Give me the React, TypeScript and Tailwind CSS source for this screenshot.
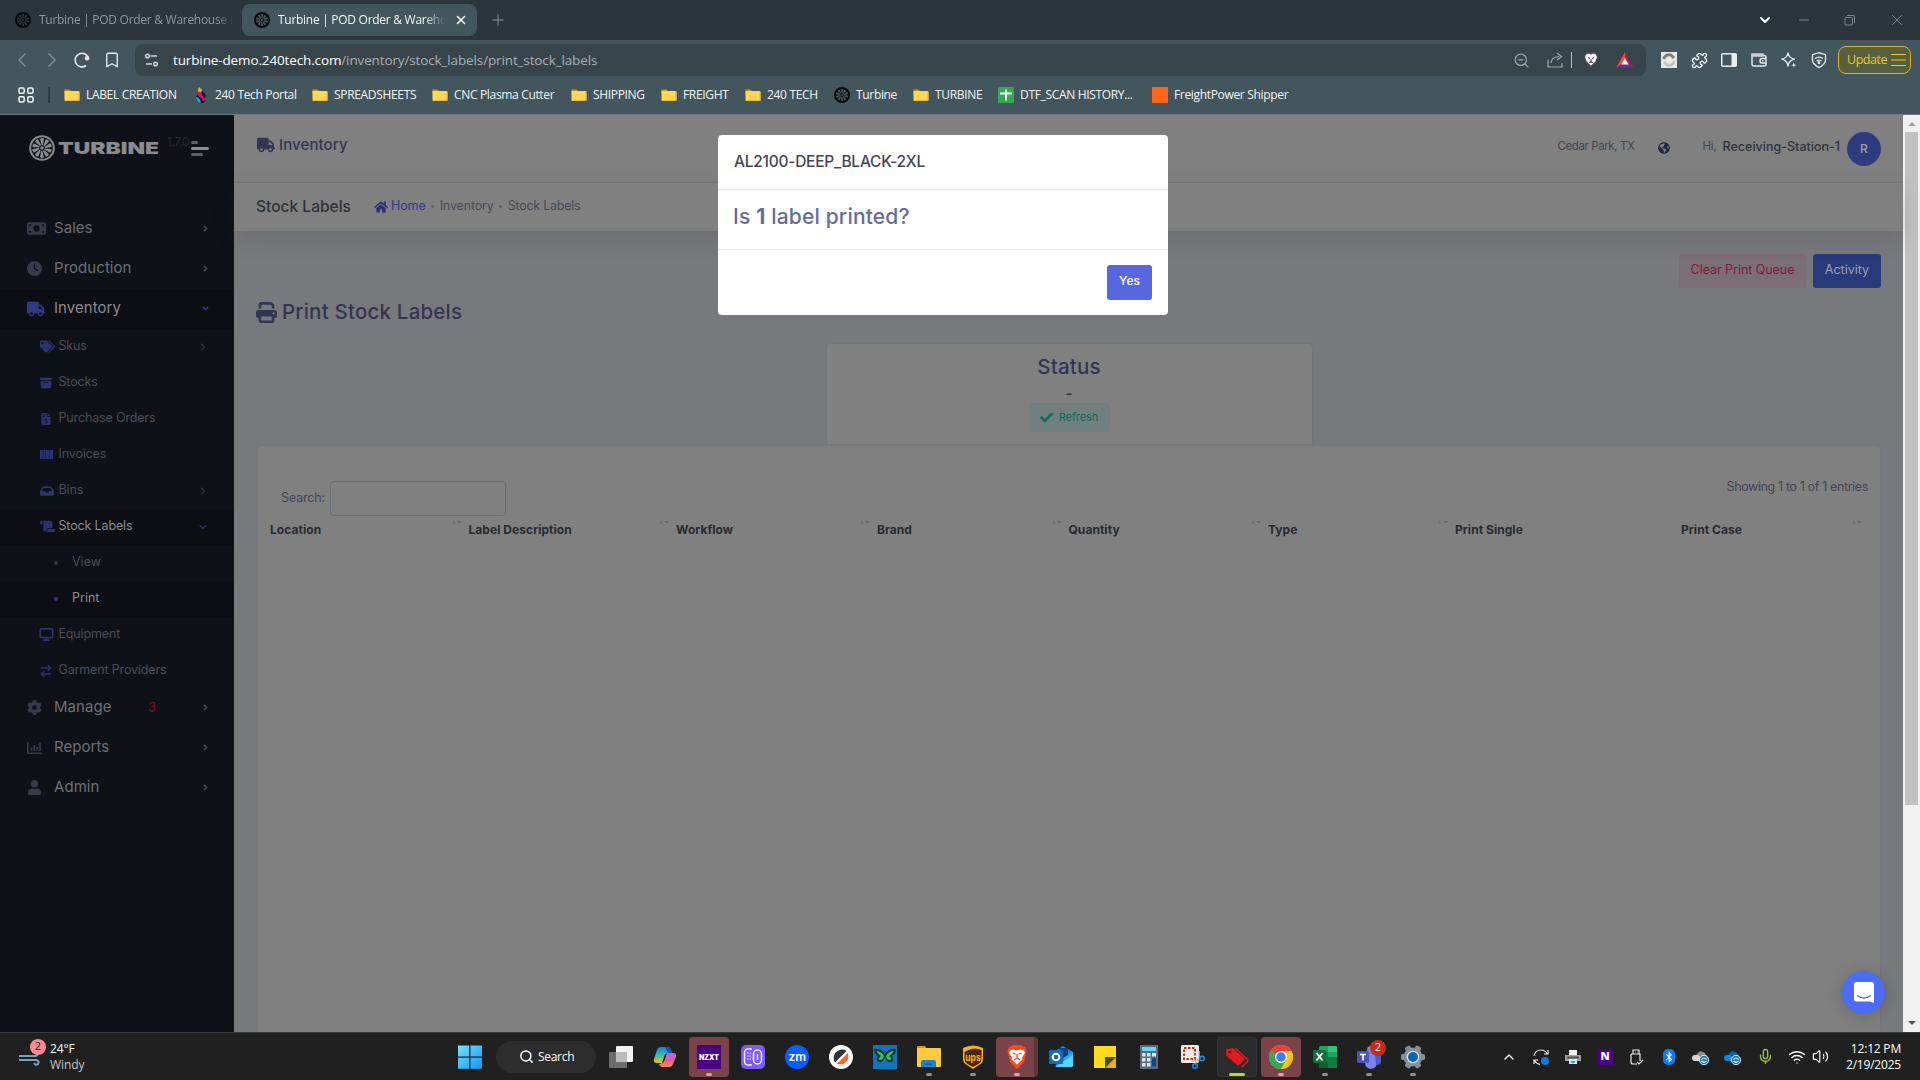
import type { ReactNode } from "react";
import { FaHome, FaGlobeAmericas, FaTags, FaInbox, FaUser, FaCheck } from "react-icons/fa";
import {
  FaTruck, FaMoneyBill, FaClock, FaBoxArchive, FaFileInvoiceDollar, FaScroll,
  FaArrowRightArrowLeft, FaGear, FaPrint, FaBluetoothB,
} from "react-icons/fa6";
import {
  Search, ChevronDown, ChevronRight, ChevronUp, ChevronLeft, X, Plus, Minus, Puzzle, Bookmark,
  ZoomOut, Mic, Wifi, Volume2, Monitor,
} from "lucide-react";

/* ---------- browser chrome ---------- */

function TurbineMark({ className, fg = "#4b5a60", bg = "#05080a" }: { className: string; fg?: string; bg?: string }) {
  const blades = [0, 36, 72, 108, 144, 180, 216, 252, 288, 324];
  return (
    <svg viewBox="0 0 32 32" className={className}>
      <circle cx="16" cy="16" r="16" fill={bg} />
      {blades.map((a) => (
        <path key={a} d="M15.5 12.5 L13.6 4.6 Q16 3.2 18.4 4.2 L17.2 12.5Z" fill={fg} transform={`rotate(${a} 16 16)`} />
      ))}
      <circle cx="16" cy="16" r="2.2" fill={fg} />
    </svg>
  );
}

function Folder() {
  return (
    <svg viewBox="0 0 16 16" className="size-4 shrink-0">
      <path d="M0.5 2.5h5l1.5 1.5h8v3H0.5z" fill="#c99512" />
      <path d="M1 4h13.5q1 0 1 1v8q0 1-1 1H1.5q-1 0-1-1V4.5z" fill="#ffd758" />
      <path d="M15 5v8.5H2" fill="none" stroke="#efb62e" />
    </svg>
  );
}

function PortalIcon() {
  return (
    <svg viewBox="0 0 16 16" className="size-4 shrink-0">
      <path d="M8 3q5 3 5 8t-5 5-5-4 5-9z" fill="#1b1620" />
      <path d="M6 0l3 3-1 3-3-2z" fill="#f4b81c" />
      <path d="M4 6q4-3 5 1t3 4l1-3q1 6-3 6-1-3-3-4T4 6z" fill="#d3127a" />
      <path d="M3 10q3 0 5 5l-1 1q-4-1-4-6z" fill="#18a8e0" />
    </svg>
  );
}

function SheetIcon() {
  return (
    <svg viewBox="0 0 16 16" className="size-4 shrink-0">
      <rect width="16" height="16" rx="1.5" fill="#34a853" />
      <path d="M8 2.5v11M2 6.5h12" stroke="#fff" strokeWidth="1.8" />
    </svg>
  );
}

const bookmarks: { label: string; icon: ReactNode; width: string }[] = [
  { label: "LABEL CREATION", icon: <Folder />, width: "w-[129px]" },
  { label: "240 Tech Portal", icon: <PortalIcon />, width: "w-[119px]" },
  { label: "SPREADSHEETS", icon: <Folder />, width: "w-[120px]" },
  { label: "CNC Plasma Cutter", icon: <Folder />, width: "w-[139px]" },
  { label: "SHIPPING", icon: <Folder />, width: "w-[90px]" },
  { label: "FREIGHT", icon: <Folder />, width: "w-[84px]" },
  { label: "240 TECH", icon: <Folder />, width: "w-[89px]" },
  { label: "Turbine", icon: <TurbineMark className="size-4 shrink-0" />, width: "w-[79px]" },
  { label: "TURBINE", icon: <Folder />, width: "w-[85px]" },
  { label: "DTF_SCAN HISTORY...", icon: <SheetIcon />, width: "w-[154px]" },
  { label: "FreightPower Shipper", icon: <span className="size-4 shrink-0 bg-[#ff6418]" />, width: "w-[150px]" },
];

function TabStrip() {
  return (
    <div className="flex h-10 shrink-0 items-center bg-[#2b353b] text-[12px] tracking-[-0.28px]">
      <div className="flex h-8 w-[242px] items-center pl-[15px] text-[#8f999d]">
        <TurbineMark className="size-4 shrink-0" fg="#2b353b" />
        <span className="ml-2 whitespace-nowrap [mask-image:linear-gradient(90deg,#000_92%,transparent)]">
          Turbine | POD Order &amp; Warehouse I
        </span>
      </div>
      <div className="flex h-8 w-[235px] items-center rounded-lg bg-[#44565d] pl-3 text-[#f4f6f7]">
        <TurbineMark className="size-4 shrink-0" />
        <span className="ml-2 w-[167px] whitespace-nowrap [mask-image:linear-gradient(90deg,#000_88%,transparent)]">
          Turbine | POD Order &amp; Wareho
        </span>
        <X className="ml-[9px] size-3.5" strokeWidth={2.6} />
      </div>
      <Plus className="ml-3 size-[18px] text-[#8b969a]" strokeWidth={1.3} />
      <div className="ml-auto flex items-center text-[#7e888c]">
        <ChevronDown className="size-4 text-white" strokeWidth={3} />
        <Minus className="ml-[23px] size-4" strokeWidth={1.5} />
        <svg viewBox="0 0 12 12" className="ml-8 size-3 fill-none stroke-current">
          <rect x="1" y="3.5" width="7.5" height="7.5" rx="1" />
          <path d="M3 1.5h6q1.5 0 1.5 1.5v6" />
        </svg>
        <X className="mr-3.5 ml-8 size-[18px]" strokeWidth={1.3} />
      </div>
    </div>
  );
}

function Toolbar() {
  return (
    <div className="flex h-10 shrink-0 items-center text-[#e9edef]">
      <ChevronLeft className="ml-2.5 size-6 text-[#87949a]" strokeWidth={1.2} />
      <ChevronRight className="ml-1.5 size-6 text-[#87949a]" strokeWidth={1.2} />
      <svg viewBox="0 0 18 18" className="ml-[9px] size-[18px]">
        <path d="M13 14.5A6.8 6.8 0 1 1 15.6 8" fill="none" stroke="currentColor" strokeWidth="1.6" />
        <circle cx="14" cy="7.2" r="2.3" fill="currentColor" />
      </svg>
      <Bookmark className="ml-3 size-[18px]" strokeWidth={1.8} />
      <div className="ml-3.5 flex h-8 w-[1511px] items-center rounded-lg bg-[#37444a] pl-[9px]">
        <svg viewBox="0 0 16 16" className="size-4 fill-none stroke-[#cfd5d8] stroke-[1.5]">
          <circle cx="3.5" cy="4" r="1.8" />
          <path d="M6.5 4H13M2 12h6" />
          <circle cx="11.5" cy="12" r="1.8" />
        </svg>
        <span className="ml-[13px] text-[13.5px] tracking-[-0.13px] text-[#a7b0b4]">
          <span className="text-white">turbine-demo.240tech.com</span>/inventory/stock_labels/print_stock_labels
        </span>
        <div className="ml-auto flex items-center pr-3">
          <ZoomOut className="size-[17px] text-[#9fa9ad]" strokeWidth={1.7} />
          <svg viewBox="0 0 16 16" className="ml-[17px] size-4 fill-none stroke-[#9fa9ad] stroke-[1.2]">
            <path d="M1 7.5V15h14v-4M4 11q.5-6 8-6.5M10 1l4.5 3.5L10 8" />
          </svg>
          <span className="ml-2 h-4 w-px bg-[#b7bfc2]" />
          <svg viewBox="0 0 16 16" className="ml-[11px] size-4">
            <path d="M2 2l2-2h8l2 2 1 3-2 7-5 4-5-4-2-7z" fill="#4b4654" />
            <path d="M3 2.5l3-1 2 1 2-1 3 1 1 3-2 4.5-4 3.5-4-3.5-2-4.500z" fill="#f5f5f7" />
            <path d="M5 5.5l2 1M11 5.5l-2 1M8 7v3M6 10.5l2-1 2 1" stroke="#4b4654" />
          </svg>
          <svg viewBox="0 0 18 16" className="ml-[17px] h-4 w-[18px]">
            <path d="M9 0L9 7 5.5 12 0 16z" fill="#ff4b20" />
            <path d="M9 0l9 16-5.500-4L9 7z" fill="#9e1f63" />
            <path d="M0 16l5.500-4h7L18 16z" fill="#662d91" />
            <path d="M9 6l3.700 6.500H5.300z" fill="#fff" />
          </svg>
        </div>
      </div>
      <div className="ml-[15px] flex items-center gap-3.5">
        <span className="flex size-4 items-center justify-center bg-[#e9e9e9]">
          <svg viewBox="0 0 16 16" className="size-4 fill-none stroke-[3]">
            <path d="M2.5 7Q5 1.5 10 3l3 3" stroke="#7d7d7d" />
            <path d="M13.5 9Q11 14.5 6 13l-3-3" stroke="#c4c4c4" />
          </svg>
        </span>
        <Puzzle className="-mr-px size-[17px]" strokeWidth={2} />
        <svg viewBox="0 0 16 14" className="h-3.5 w-4">
          <rect x=".75" y=".75" width="14.5" height="12.5" rx="1" fill="none" stroke="currentColor" strokeWidth="1.5" />
          <path d="M10.5 1H15v12h-4.500z" fill="currentColor" />
        </svg>
        <svg viewBox="0 0 16 14" className="h-3.5 w-4 fill-none stroke-[#e2e7e9] stroke-[1.5]">
          <path d="M1 2.5h12q2 0 2 2v7q0 1.500-2 1.500H3q-2 0-2-2z" />
          <path d="M1 1h11v2H1z" fill="#c9cfd2" stroke="#c9cfd2" />
          <path d="M15 5.500h-4q-2 0-2 2.200t2 2.300h4M11 7.700h1.500" />
        </svg>
        <svg viewBox="0 0 16 16" className="size-4 fill-none stroke-current stroke-[1.3]">
          <path d="M7 1q.8 5 6.500 6.200Q7.800 8.500 7 14 6.200 8.500.8 7.200 6.200 6 7 1z" strokeLinejoin="round" />
          <path d="M12.800 10.500l.7 2 2 .7-2 .6-.7 1.700-.7-1.700-2-.6 2-.7z" fill="currentColor" stroke="none" />
        </svg>
        <svg viewBox="0 0 16 16" className="size-4 fill-none stroke-current stroke-[1.3]">
          <path d="M8 .7l6.500 2v6Q13.500 13 8 15.500 2.500 13 1.500 8.700v-6z" />
          <path d="M4 6.500q4-2.800 8 0M5.500 9q2.500-1.700 5 0" />
          <circle cx="8" cy="10.700" r=".7" />
        </svg>
      </div>
      <div className="ml-[11px] flex h-7 w-[73px] items-center rounded-lg border-[1.5px] border-[#dcb32c] bg-[#56603f] pl-2 text-[12.5px] tracking-[-0.45px] text-[#f0c52f]">
        Update
        <svg viewBox="0 0 15 12" className="ml-1 h-3 w-[15px] shrink-0 stroke-[#f0c52f]">
          <path d="M0 .5h15M0 6h15M0 11.500h15" />
        </svg>
      </div>
    </div>
  );
}

function BookmarksBar() {
  return (
    <div className="flex h-[35px] shrink-0 items-center border-b border-[#6b797e] pb-1 text-[12px] tracking-[-0.33px] text-[#f2f5f6]">
      <svg viewBox="0 0 16 16" className="ml-[18px] size-4 fill-none stroke-current stroke-[1.5]">
        <rect x="1" y="1" width="5.200" height="5.200" rx="1.200" />
        <rect x="9.800" y="1" width="5.200" height="5.200" rx="1.200" />
        <rect x="1" y="9.800" width="5.200" height="5.200" rx="1.200" />
        <rect x="9.800" y="9.800" width="5.200" height="5.200" rx="1.200" />
      </svg>
      <span className="mr-3.5 ml-3.5 h-4 w-0.5 bg-[#2f3c42]" />
      {bookmarks.map((b) => (
        <div key={b.label} className={`flex items-center gap-1.5 whitespace-nowrap ${b.width}`}>
          {b.icon}
          <span>{b.label}</span>
        </div>
      ))}
    </div>
  );
}

/* ---------- application ---------- */

const InvoiceStrip = () => (
  <svg viewBox="0 0 13 9" className="h-[9px] w-[13px]">
    <rect width="13" height="9" fill="currentColor" />
    <path d="M3 0v9M5.500 0v9M9.500 0v9" stroke="#151a45" strokeWidth=".6" />
  </svg>
);

const BarChart = () => (
  <svg viewBox="0 0 15 12" className="h-3 w-[15px]">
    <path d="M.8 0v11.200H15" fill="none" stroke="currentColor" strokeWidth="1.600" />
    <path d="M4.500 9V5.500M7.200 9V3M10 9V4.500M13 9V.8" stroke="currentColor" strokeWidth="1.700" />
  </svg>
);

function TopItem({ icon, label, active, badge }: { icon: ReactNode; label: string; active?: boolean; badge?: string }) {
  return (
    <div className={`flex h-10 items-center pl-[27px] text-[15px] ${active ? "bg-[#0c0e14] text-[#8a8b8e]" : "text-[#6d6f76]"}`}>
      <span className={`w-[27px] ${active ? "text-[#2f3a82]" : "text-[#363a49]"}`}>{icon}</span>
      <span className="w-[94px] tracking-[0.05px]">{label}</span>
      <span className="text-[13px] text-[#8c0b16]">{badge}</span>
      {active ? (
        <ChevronDown className="mr-6 ml-auto size-[9px] text-[#2f3a82]" strokeWidth={4} />
      ) : (
        <ChevronRight className="mr-6 ml-auto size-[9px] text-[#4a4c57]" strokeWidth={4} />
      )}
    </div>
  );
}

function SubItem({ icon, label, active, arrow }: { icon: ReactNode; label: string; active?: boolean; arrow?: boolean }) {
  return (
    <div className={`flex h-9 items-center pl-10 text-[12.5px] ${active ? "bg-[#0c0e14] text-[#8a8b8e]" : "text-[#4a4d57]"}`}>
      <span className="w-[18.5px] text-[#2b3372]">{icon}</span>
      <span className="tracking-[-0.15px] whitespace-nowrap">{label}</span>
      {arrow && !active && <ChevronRight className="mr-[25px] ml-auto size-3 text-[#32343f]" strokeWidth={2.2} />}
      {arrow && active && <ChevronDown className="mr-[25px] ml-auto size-3 text-[#2b3372]" strokeWidth={2.2} />}
    </div>
  );
}

function LeafItem({ label, active }: { label: string; active?: boolean }) {
  return (
    <div className={`flex h-9 items-center pl-[54px] text-[12.5px] ${active ? "bg-[#0c0e14] text-[#8a8b8e]" : "text-[#4a4d57]"}`}>
      <span className={`mr-3.5 size-1 rounded-full ${active ? "bg-[#2f3a82]" : "bg-[#363a49]"}`} />
      <span>{label}</span>
    </div>
  );
}

function Sidebar() {
  return (
    <aside className="w-[234px] shrink-0 bg-[#0f1118]">
      <div className="flex h-[93.5px] pl-[29px]">
        <TurbineMark className="mt-5 size-[26px]" fg="#8a8b8d" bg="#0f1118" />
        <svg viewBox="0 0 131 26" className="-ml-[26px] mt-5 h-[26px] w-[131px] shrink-0">
          <circle cx="13" cy="13" r="11.800" fill="none" stroke="#8a8b8d" strokeWidth="2" />
          <text x="29" y="19" fontFamily="Inter" fontWeight="900" fontSize="16.500" textLength="101" lengthAdjust="spacingAndGlyphs" fill="#8a8b8d">
            TURBINE
          </text>
        </svg>
        <span className="mt-[18px] ml-[7px] w-6 text-[12px] leading-[18px] font-light tracking-[-0.3px] text-[#2c2f3c]">1.7.0</span>
        <div className="mt-[26px] flex flex-col gap-[3.5px]">
          <span className="h-[2.5px] w-[7px] rounded bg-[#5f6065]" />
          <span className="h-[2.5px] w-[18px] rounded bg-[#8a8b8d]" />
          <span className="h-[2.5px] w-3 rounded bg-[#5f6065]" />
        </div>
      </div>
      <TopItem icon={<FaMoneyBill className="size-[19px]" />} label="Sales" />
      <TopItem icon={<FaClock className="size-[15px]" />} label="Production" />
      <TopItem icon={<FaTruck className="size-[18px]" />} label="Inventory" active />
      <SubItem icon={<FaTags className="size-[15px]" />} label="Skus" arrow />
      <SubItem icon={<FaBoxArchive className="size-3" />} label="Stocks" />
      <SubItem icon={<FaFileInvoiceDollar className="size-3" />} label="Purchase Orders" />
      <SubItem icon={<InvoiceStrip />} label="Invoices" />
      <SubItem icon={<FaInbox className="size-3.5" />} label="Bins" arrow />
      <SubItem icon={<FaScroll className="size-[15px]" />} label="Stock Labels" arrow active />
      <LeafItem label="View" />
      <LeafItem label="Print" active />
      <SubItem icon={<Monitor className="-ml-px size-[15px]" strokeWidth={2.6} />} label="Equipment" />
      <SubItem icon={<FaArrowRightArrowLeft className="size-3" />} label="Garment Providers" />
      <div className="-mt-px">
        <TopItem icon={<FaGear className="size-[15px]" />} label="Manage" badge="3" />
        <TopItem icon={<BarChart />} label="Reports" />
        <TopItem icon={<FaUser className="size-[15px]" />} label="Admin" />
      </div>
    </aside>
  );
}

function Header() {
  return (
    <>
      <header className="flex h-[68px] shrink-0 items-center border-b border-[#777778] bg-[#808080] pr-[22px] pl-[23px]">
        <FaTruck className="mb-2 size-[18px] text-[#323650]" />
        <span className="mb-1.5 ml-1 text-[15px] font-medium tracking-[0.1px] text-[#323650]">Inventory</span>
        <div className="ml-auto flex items-center text-[#444551]">
          <span className="mb-[3px] text-[11.5px] tracking-[-0.4px]">Cedar Park, TX</span>
          <FaGlobeAmericas className="mb-px ml-6 size-3 text-[#25283c]" />
          <span className="mb-[3px] ml-8 text-[11.5px] tracking-[-0.2px]">Hi,</span>
          <span className="mb-[3px] ml-1.5 text-[12.5px] font-medium tracking-[0.01px] text-[#303340]">Receiving-Station-1</span>
          <span className="ml-[7px] flex size-[34px] items-center justify-center rounded-full bg-[#2e3b7f] text-[12px] font-semibold text-[#9498ae]">R</span>
        </div>
      </header>
      <div className="relative flex h-12 shrink-0 items-center bg-[#808080] pb-px pl-[22px] shadow-[0_8px_22px_rgba(40,40,50,0.14)]">
        <h3 className="text-[15.5px] font-medium tracking-[0.02px] text-[#303238]">Stock Labels</h3>
        <div className="ml-[23px] flex items-center text-[12.5px] text-[#4a4b57]">
          <FaHome className="size-3.5 text-[#2b3078]" />
          <span className="ml-[3px] tracking-[-0.1px] text-[#34388a]">Home</span>
          <i className="mx-[5.5px] size-[3px] rounded-full bg-[#606170]" />
          <span className="tracking-[-0.15px]">Inventory</span>
          <i className="mx-[5.5px] size-[3px] rounded-full bg-[#606170]" />
          <span className="tracking-[-0.25px]">Stock Labels</span>
        </div>
      </div>
    </>
  );
}

const columns = [
  { label: "Location", width: "w-[198.5px]" },
  { label: "Label Description", width: "w-[207.5px]" },
  { label: "Workflow", width: "w-[201px]" },
  { label: "Brand", width: "w-[191.500px]" },
  { label: "Quantity", width: "w-[199.500px]" },
  { label: "Type", width: "w-[187px]" },
  { label: "Print Single", width: "w-[226px]", unsorted: true },
  { label: "Print Case", width: "w-[188px]" },
];

function SortMark() {
  return (
    <svg viewBox="0 0 9 3" className="mr-[7px] h-[3px] w-[9px]">
      <path d="M.5 0h1v3h-1zM4 0h5L6.500 2.500z" fill="#666771" />
    </svg>
  );
}

function Content() {
  return (
    <main className="flex min-h-0 flex-1 flex-col pr-[22px] pl-[23px]">
      <div className="flex justify-end gap-[7px] pt-[23px] text-[12.5px]">
        <button className="flex h-[34px] w-[127px] justify-center rounded-[3px] bg-[#7c6e75] pt-[7px] tracking-[-0.05px] text-[#7d1c3c]">Clear Print Queue</button>
        <button className="flex h-[34px] w-[68px] justify-center rounded-[3px] bg-[#283a79] pt-[7px] text-[#9a9fb5]">Activity</button>
      </div>
      <div className="mt-[9px] flex h-[30px] items-center text-[#323650]">
        <FaPrint className="-ml-px size-[21px]" />
        <h2 className="ml-[5px] text-[20.5px] font-medium tracking-[0.2px]">Print Stock Labels</h2>
      </div>
      <div className="mt-4 flex h-[102px] w-[487px] flex-col items-center self-center rounded-t-[4px] border border-[#74757a] bg-[#808080]">
        <h2 className="mt-2 text-[20.5px] leading-[30px] font-medium tracking-[0.2px] text-[#323650]">Status</h2>
        <span className="mt-0.5 h-[19px] text-[15px] leading-5 font-semibold text-[#33363f]">-</span>
        <button className="flex h-[29px] w-[81px] items-center justify-center gap-1.5 rounded-[3px] bg-[#71807f] text-[11px] tracking-[-0.1px] text-[#0e6e5a]">
          <FaCheck className="size-[13px]" />
          Refresh
        </button>
      </div>
      <section className="flex-1 rounded-t-[4px] border border-b-0 border-[#74757d] bg-[#808080]">
        <div className="flex justify-between pr-3 pl-[23px] text-[12.5px] text-[#444653]">
          <label className="mt-[35px] flex items-center gap-1.5">
            <span className="w-[43px] tracking-[-0.15px] whitespace-nowrap">Search:</span>
            <input className="h-[35px] w-[176px] rounded-[4px] border border-[#6b6c76] bg-transparent" />
          </label>
          <span className="mt-8 tracking-[-0.37px]">Showing 1 to 1 of 1 entries</span>
        </div>
        <div className="mt-[5px] flex pl-3">
          {columns.map((c) => (
            <div key={c.label} className={`flex items-start justify-between ${c.width}`}>
              <span className="text-[12px] leading-[18px] font-bold tracking-[0.05px] whitespace-nowrap text-[#282a31]">{c.label}</span>
              {!c.unsorted && <SortMark />}
            </div>
          ))}
        </div>
      </section>
    </main>
  );
}

function Modal() {
  return (
    <div className="absolute top-5 left-[718px] h-[180px] w-[450px] rounded-[4px] bg-white">
      <h5 className="h-[55px] border-b border-[#ebedf2] pt-[15px] pl-4 text-[15.5px] leading-6 font-medium tracking-[-0.25px] text-[#464457]">AL2100-DEEP_BLACK-2XL</h5>
      <div className="h-[60px] border-b border-[#ebedf2] pt-[11px] pl-[15px] text-[21px] leading-[31px] font-medium tracking-[0.18px] text-[#646c9a]">
        Is <b>1</b> label printed?
      </div>
      <div className="flex justify-end pt-[15px] pr-4">
        <button className="flex h-[35px] w-[45px] justify-center rounded-[3px] bg-[#5867dd] pt-[7px] text-[12px] font-medium text-white">Yes</button>
      </div>
    </div>
  );
}

function PageScrollbar() {
  return (
    <div className="flex w-[17px] shrink-0 flex-col items-center bg-[#f1f1f1]">
      <span className="mt-[7px] border-x-4 border-b-4 border-x-transparent border-b-[#a3a3a3]" />
      <span className="mt-1.5 h-[673px] w-[13px] bg-[#c1c1c1]" />
      <span className="mt-auto mb-[7px] border-x-4 border-t-4 border-x-transparent border-t-[#505050]" />
    </div>
  );
}

function ChatBubble() {
  return (
    <div className="absolute right-[18px] bottom-[18px] flex size-[43px] items-center justify-center rounded-full bg-[#4a6cf7] shadow-[0_2px_16px_rgba(0,0,0,0.2)]">
      <svg viewBox="0 0 20 21" className="h-[21px] w-5">
        <path d="M2.500 0h15Q20 0 20 2.500V21l-4-1.500H2.500Q0 19.500 0 17V2.500Q0 0 2.500 0z" fill="#fff" />
        <path d="M3.500 13.800q6.500 4.500 13 0" fill="none" stroke="#4a6cf7" strokeWidth="1.200" strokeLinecap="round" />
      </svg>
    </div>
  );
}

/* ---------- taskbar ---------- */

const art: Record<string, ReactNode> = {
  taskview: (<><rect x="7" y="1" width="17" height="16" rx="1" fill="#f2f2f2" /><rect x="0" y="7" width="18" height="16" rx="1" fill="#6d6d6d" /><path d="M7 7h11v10H7z" fill="#bcbcbc" /></>),
  copilot: (<>
    <defs>
      <linearGradient id="cpA" x1="0" y1="0" x2="0" y2="1"><stop stopColor="#1f7be8" /><stop offset=".5" stopColor="#35bfae" /><stop offset="1" stopColor="#f2c419" /></linearGradient>
      <linearGradient id="cpB" x1="0" y1="0" x2="0" y2="1"><stop stopColor="#a46df0" /><stop offset=".5" stopColor="#e85aa0" /><stop offset="1" stopColor="#ff8a4a" /></linearGradient>
    </defs>
    <path d="M8 2h7q2 0 3 3l1 3h-4q-3 0-4 4l-2 6H4q-4 0-3-4l3-9q1-3 4-3z" fill="url(#cpA)" />
    <path d="M16 22H9q-2 0-3-3l3-1q2 0 3-4l2-6h6q4 0 3 4l-3 7q-1 3-4 3z" fill="url(#cpB)" />
    <path d="M12 2h4q2 1 3 6h-4z" fill="#1c4fc4" />
  </>),
  nzxt: (<><rect width="24" height="24" fill="#4b0082" /><text x="2" y="15" fontFamily="Inter" fontWeight="900" fontSize="7" textLength="20" lengthAdjust="spacingAndGlyphs" fill="#fff">NZXT</text></>),
  podcast: (<><rect width="24" height="24" rx="5" fill="#7c5cf5" /><g fill="none" stroke="#f0eaff" strokeWidth="1.500"><path d="M11 4H7Q3.500 4 3.500 8v8q0 4 3.500 4h4" /><rect x="12.500" y="5" width="8" height="14" rx="4" /><path d="M16.500 9v6" /></g><path d="M6 8h4M6 11h4M6 14h4" stroke="#f0eaff" strokeDasharray="1.500 1" /></>),
  zoom: (<><circle cx="12" cy="12" r="12" fill="#0b5cff" /><text x="3.500" y="16" fontFamily="Inter" fontWeight="600" fontSize="12" textLength="17.500" lengthAdjust="spacingAndGlyphs" fill="#fff">zm</text></>),
  slicer: (<><circle cx="12" cy="12" r="12" fill="#fff" /><path d="M17.500 6A8.300 8.300 0 0 0 6 17.500z" fill="#2f3338" /><path d="M18.800 8A8.300 8.300 0 0 1 8 18.800z" fill="#f26a21" /></>),
  butterfly: (<><rect width="24" height="24" fill="#1273b8" /><path d="M12 9Q8 3 1 4q0 5 4 7-3 5 1 6 4 1 6-5 2 6 6 5 4-1 1-6 4-2 4-7-7-1-11 5z" fill="#13382b" /><path d="M11 11Q8 6 3 6q2 3 5 5-4 3-1 4 3 0 4-4zM13 11q3-5 8-5-2 3-5 5 4 3 1 4-3 0-4-4z" fill="#2fc46a" /></>),
  explorer: (<><path d="M0 2q0-1 1-1h7l2 3h-10z" fill="#d99a13" /><rect y="3" width="24" height="19" rx="1" fill="#ffcb3d" /><path d="M4 17q0-2 2-2h11q2 0 2 2v5H4z" fill="#1f7fd0" /><path d="M8 18.500h7v1.500H8z" fill="#135a9c" /></>),
  ups: (<><path d="M2 3Q12-2 22 3v11q0 4-4 6l-6 4-6-4q-4-2-4-6z" fill="#f7b512" /><path d="M3.500 7Q12 1 20.500 5v9q0 3-3 5L12 22l-5.500-3q-3-2-3-5z" fill="#4a2515" /><text x="4.200" y="15.500" fontFamily="Inter" fontWeight="700" fontSize="10" textLength="15.500" lengthAdjust="spacingAndGlyphs" fill="#f7b512">ups</text></>),
  brave: (<><path d="M6 1.500L8 0h8l2 1.500 2 .5 1.500 4L19 17l-7 7-7-7L2.500 6 4 2z" fill="#fb4a1e" /><path d="M5 5.500L9 4.500l3 1 3-1 4 1L20 8l-3 4.500.5 2L12 19.500 6.500 14.500l.5-2L4 8z" fill="#fff" /><path d="M7.500 8l3 1.200M16.500 8l-3 1.200M12 9v4M9 15l3-2 3 2" stroke="#fb4a1e" strokeWidth="1.300" fill="none" /></>),
  outlook: (<><path d="M5 7l9-6 10 6v13q0 2-2 2H7z" fill="#1490df" /><path d="M14 13l10-6v14z" fill="#28a8ea" /><path d="M6 22l18-12v10q0 2-2 2z" fill="#50d9ff" /><path d="M10 3h9v7l-5 3z" fill="#0a3f85" /><rect y="5" width="14" height="14" rx="1.500" fill="#0f6cbd" /><circle cx="7" cy="12" r="3.300" fill="none" stroke="#fff" strokeWidth="2" /></>),
  notes: (<><path d="M1 1h22v12L13 23H1z" fill="#ffda1f" /><path d="M12 12h11L12 23z" fill="#4a4738" /><path d="M13 23h10V13z" fill="#e8b400" /></>),
  calc: (<><rect x="3" y="0" width="18" height="24" rx="1" fill="#5d6b78" /><path d="M5 2h14v4H5z" fill="#5fd8ff" /><path d="M5 8h3.500v3.500H5zM10 8h3.500v3.500H10zM15 8h4v3.500h-4zM5 13h3.500v3.500H5zM10 13h3.500v3.500H10zM5 18h3.500v3.500H5zM10 18h3.500v3.500H10z" fill="#dfe5ea" /><path d="M15 13h4v8.500h-4z" fill="#0d468f" /></>),
  snip: (<><rect width="18" height="18" rx="1.500" fill="#ededed" /><rect x="3" y="3" width="11" height="11" fill="none" stroke="#c93a14" strokeWidth="2" strokeDasharray="2.500 1.500" /><path d="M18 6v7l-4 6M11 16h7" stroke="#b9bcc0" strokeWidth="1.500" fill="none" /><circle cx="21" cy="13.500" r="2.300" fill="none" stroke="#1e90d8" strokeWidth="1.500" /><circle cx="14" cy="21" r="2.300" fill="none" stroke="#1e90d8" strokeWidth="1.500" /></>),
  tags: (<><path d="M1 4.500L8 3l11 10q1 1 0 2l-5 5q-1 1-2 0L1.500 11z" fill="#e5171f" /><path d="M10.500 3.500L22.500 14.500q.7 1 0 2L17 22" fill="none" stroke="#e5171f" strokeWidth="1.500" /><circle cx="4.800" cy="7" r="1.300" fill="#2b2b2b" /></>),
  chrome: (<><circle cx="12" cy="12" r="12" fill="#fbc116" /><path d="M12 12L1.600 6A12 12 0 0 1 22.400 6z" fill="#ea4335" /><path d="M12 12L1.600 6A12 12 0 0 0 12 24l5.200-9z" fill="#34a853" /><path d="M12 6h10.400A12 12 0 0 1 12 24l5.200-9z" fill="#fbc116" /><circle cx="12" cy="12" r="6" fill="#fff" /><circle cx="12" cy="12" r="4.700" fill="#3b7ded" /></>),
  excel: (<><rect x="6" y="1" width="18" height="22" rx="1.500" fill="#21a366" /><path d="M15 1h7.500q1.500 0 1.500 1.500V7h-9z" fill="#33c481" /><path d="M6 12h18v11H6z" fill="#107c41" /><path d="M6 7h9v6H6z" fill="#107c41" /><path d="M6 17h9v6H6z" fill="#185c37" /><rect y="5" width="13" height="13" rx="1" fill="#0f703b" /><path d="M3.500 8l6 7.500M9.500 8l-6 7.500" stroke="#fff" strokeWidth="2" /></>),
  teams: (<><circle cx="14" cy="5" r="4" fill="#7b83eb" /><path d="M8 9h12v9q0 5-6 6-6-1-6-6z" fill="#7b83eb" /><path d="M18 10h6v7q0 3-5 3z" fill="#5059c9" /><rect y="6" width="12" height="12" rx="1.500" fill="#4b53bc" /><path d="M3 9.500h6M6 9.500V15.500" stroke="#fff" strokeWidth="1.700" /></>),
  settings: (<><g fill="#868f98"><circle cx="12" cy="12" r="9.500" />{[30, 90, 150, 210, 270, 330].map((a) => (<rect key={a} x="9" y="0" width="6" height="6" rx="1.500" transform={`rotate(${a} 12 12)`} />))}</g><circle cx="12" cy="12" r="6.300" fill="#d9e6f2" /><circle cx="12" cy="12" r="5" fill="#0f63b5" /></>),
};

type App = { name: string; mark?: string; tile?: string };
const apps: App[] = [
  { name: "taskview" },
  { name: "copilot" },
  { name: "nzxt", tile: "bg-[#7a434a]", mark: "w-1.5 bg-[#f593a0]" },
  { name: "podcast" },
  { name: "zoom" },
  { name: "slicer" },
  { name: "butterfly" },
  { name: "explorer", mark: "w-1.5 bg-[#8e8e8e]" },
  { name: "ups", mark: "w-1.5 bg-[#8e8e8e]" },
  { name: "brave", tile: "bg-[#7a434a] border-r-[4px] border-r-[#5e363c] pl-1 -ml-px -mr-px w-[42px]", mark: "w-1.5 bg-[#f593a0]" },
  { name: "outlook" },
  { name: "notes" },
  { name: "calc" },
  { name: "snip" },
  { name: "tags", tile: "bg-[#2c2c2c] ring-1 ring-[#353535] ring-inset", mark: "w-4 bg-[#a0e81e]" },
  { name: "chrome", tile: "bg-[#7a434a]", mark: "w-1.5 bg-[#f593a0]" },
  { name: "excel", mark: "w-1.5 bg-[#8e8e8e]" },
  { name: "teams", mark: "w-1.5 bg-[#8e8e8e]" },
  { name: "settings", mark: "w-1.5 bg-[#8e8e8e]" },
];

function AppIcon({ app }: { app: App }) {
  return (
    <div className={`relative flex h-10 min-w-10 items-center justify-center rounded ${app.tile ?? ""}`}>
      <svg viewBox="0 0 24 24" className="size-6 overflow-visible">{art[app.name]}</svg>
      {app.mark && <span className={`absolute bottom-px h-[3px] rounded-full ${app.mark}`} />}
      {app.name === "teams" && (
        <span className="absolute top-[3px] right-[3px] flex size-4 items-center justify-center rounded-full bg-[#c42b1c] text-[11px] text-white">2</span>
      )}
    </div>
  );
}

function SyncCloud({ fill, light }: { fill: string; light: string }) {
  return (
    <svg viewBox="0 0 18 16" className="h-4 w-[18px]">
      <path d="M5 5q2-4 6-2 2 0 3 3 2 1 2 3v2H3z" fill={fill} />
      <path d="M3 6q4-1 6 3l-2 3H3q-3 0-3-3t3-3z" fill={light} />
      <circle cx="12" cy="11" r="4.700" fill="#1470c8" stroke="#dce9f6" />
      <path d="M9.500 10.500q2.500-3 5 0M9.500 12q2.500 2.500 5 0" stroke="#fff" strokeWidth="1.200" fill="none" />
    </svg>
  );
}

function Tray() {
  return (
    <div className="ml-auto flex items-center text-white">
      <div className="flex items-center [&>span]:flex [&>span]:w-8 [&>span]:justify-center">
        <span><ChevronUp className="size-4" strokeWidth={2} /></span>
        <span>
          <svg viewBox="0 0 16 16" className="size-4 fill-none stroke-[#e8e8e8] stroke-[1.2]">
            <path d="M1 7Q2 1 8 1q4 0 6.500 4M15 1v4h-4M1 15v-4h4M1.500 11.500Q3.500 15 7 15.300" />
            <circle cx="12" cy="12" r="4" fill="#0f78d8" stroke="none" />
          </svg>
        </span>
        <span>
          <svg viewBox="0 0 16 16" className="size-4">
            <path d="M4 1h8v5H4z" fill="#f4f4f4" /><path d="M0 6h16v6H0z" fill="#9ba0a5" /><path d="M2 7.500h12v2H2z" fill="#4d5257" /><path d="M4 10h8v5H4z" fill="#dcecf5" /><path d="M6 12h4v2H6z" fill="#4aa3cf" />
          </svg>
        </span>
        <span>
          <b className="flex size-4 items-center justify-center bg-[#4b0082] text-[11px] font-black">N</b>
        </span>
        <span>
          <svg viewBox="0 0 14 16" className="h-4 w-3.5 fill-none stroke-[#e8e8e8] stroke-[1.2]">
            <path d="M3 5V1h6v4M1 5h9v7M1 5v8q0 2 2 2h4M5 3h.5M7 3h.5M7 13l2 2 4-4" />
          </svg>
        </span>
        <span>
          <i className="flex h-4 w-3 items-center justify-center rounded-[5px] bg-[#0a7cf0]"><FaBluetoothB className="size-3" /></i>
        </span>
        <span><SyncCloud fill="#8c8c8c" light="#d5d5d5" /></span>
        <span><SyncCloud fill="#0a5fb0" light="#1286dd" /></span>
        <span><Mic className="size-[17px] text-[#8fbf45]" strokeWidth={2} /></span>
        <span><Wifi className="size-[18px]" strokeWidth={1.8} /></span>
      </div>
      <Volume2 className="-ml-px size-[17px]" strokeWidth={1.6} />
      <div className="mr-[19px] ml-2 w-[64px] text-right text-[12px] leading-4 tracking-[-0.2px] whitespace-nowrap">
        <div>12:12 PM</div>
        <div>2/19/2025</div>
      </div>
    </div>
  );
}

function Taskbar() {
  return (
    <footer className="flex h-12 shrink-0 items-center border-t border-[#3a3a3a] bg-[#202020] text-[12px] text-white">
      <div className="flex w-[458px] items-center pl-[18px]">
        <div className="relative h-7 w-[26px]">
          <svg viewBox="0 0 26 28" className="h-7 w-[26px]">
            <path d="M1 13h17q3-1 1-4M1 17h17q4 1 2 4-2 2-4-1" fill="none" stroke="#7ba0bd" strokeWidth="2" />
          </svg>
          <span className="absolute -top-1 left-3 flex size-4 items-center justify-center rounded-full bg-[#ff8b92] text-[11px] text-[#2c1315]">2</span>
        </div>
        <div className="ml-[6px] leading-4 tracking-[-0.1px]">
          <div>24°F</div>
          <div className="text-[#c6c6c6]">Windy</div>
        </div>
      </div>
      <svg viewBox="0 0 24 24" className="size-6">
        <defs><linearGradient id="win" x1="0" y1="0" x2="1" y2="1"><stop stopColor="#7fdcff" /><stop offset="1" stopColor="#0a9bf5" /></linearGradient></defs>
        <path d="M0 .5h11.300v11H0zM12.500.5H24v11H12.500zM0 12.700h11.300v11H0zM12.500 12.700H24v11H12.500z" fill="url(#win)" />
      </svg>
      <div className="ml-3.5 flex h-8 w-[100px] items-center rounded-full bg-[#2d2d2d] pl-[23px]">
        <Search className="size-[15px]" strokeWidth={2.4} />
        <span className="ml-1 tracking-[-0.3px]">Search</span>
      </div>
      <div className="ml-[5px] flex gap-1">
        {apps.map((a) => <AppIcon key={a.name} app={a} />)}
      </div>
      <Tray />
    </footer>
  );
}

export default function App() {
  return (
    <div className="flex h-[1080px] w-[1920px] flex-col overflow-hidden bg-[#44565d] font-['Open_Sans','Noto_Sans',sans-serif]">
      <TabStrip />
      <Toolbar />
      <BookmarksBar />
      <div className="relative flex min-h-0 flex-1 overflow-hidden bg-[#78797d] font-[Inter,'Open_Sans',sans-serif]">
        <Sidebar />
        <div className="relative flex min-w-0 flex-1 flex-col">
          <Header />
          <Content />
          <ChatBubble />
        </div>
        <PageScrollbar />
        <Modal />
      </div>
      <Taskbar />
    </div>
  );
}
